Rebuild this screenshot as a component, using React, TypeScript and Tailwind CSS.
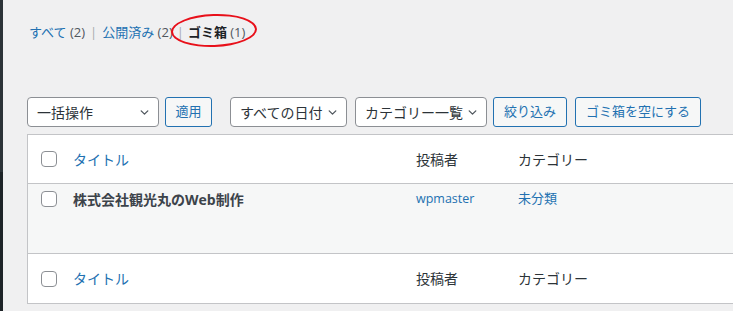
import React from 'react';

const font = "font-['Open_Sans','Noto_Sans_CJK_JP',sans-serif]";

const Chevron = () => (
  <svg width="11" height="11" viewBox="0 0 20 20" className="shrink-0">
    <path d="M4 7l6 6 6-6" fill="none" stroke="#50575e" strokeWidth="2.4" strokeLinecap="round" strokeLinejoin="round" />
  </svg>
);

const Select = ({ label, w }: { label: string; w: string }) => (
  <div className={`${w} h-[30px] bg-white border border-[#8c8f94] rounded-[4px] flex items-center justify-between pl-[9px] pr-[8px] text-[14px] text-[#2c3338]`}>
    <span>{label}</span>
    <Chevron />
  </div>
);

const Btn = ({ label, w }: { label: string; w: string }) => (
  <div className={`${w} h-[30px] bg-[#f6f7f7] border border-[#2271b1] rounded-[3px] flex items-center justify-center text-[13px] text-[#2271b1]`}>
    {label}
  </div>
);

const Check = () => <div className="w-4 h-4 bg-white border border-[#8c8f94] rounded-[4px]" />;

const HeadRow = ({ border }: { border: string }) => (
  <div className={`grid grid-cols-[45px_343px_102px_1fr] h-[49px] items-center text-[14px] ${border}`}>
    <div className="pl-[13px] flex"><Check /></div>
    <div className="text-[#2271b1]">タイトル</div>
    <div className="text-[#2c3338]">投稿者</div>
    <div className="text-[#2c3338]">カテゴリー</div>
  </div>
);

export default function App() {
  return (
    <div className={`${font} w-[733px] h-[311px] overflow-hidden flex bg-[#f0f0f1]`}>
      <div className="w-[3px] shrink-0 flex flex-col">
        <div className="h-[172px] bg-[#2c3338]" />
        <div className="flex-1 bg-[#1d2327]" />
      </div>
      <div className="flex-1 pl-[24px] pt-[23px]">
        <div className="flex items-center h-[20px] text-[13px] pl-[2px] relative">
          <span className="text-[#2271b1]">すべて <span className="text-[#50575e]">(2)</span></span>
          <span className="text-[#a7aaad] mx-[5px]">|</span>
          <span className="text-[#2271b1]">公開済み <span className="text-[#50575e]">(2)</span></span>
          <span className="text-[#a7aaad] mx-[4px]">|</span>
          <span className="text-[#1d2327] font-semibold">ゴミ箱 <span className="text-[#50575e] font-normal">(1)</span></span>
          <div className="absolute left-[144px] top-[-9px] w-[86px] h-[33px] border-2 border-[#e8101a] rounded-[50%] -rotate-2" />
        </div>
        <div className="flex items-center mt-[54px] h-[30px]">
          <Select label="一括操作" w="w-[132px]" />
          <div className="ml-[6px]"><Btn label="適用" w="w-[47px]" /></div>
          <div className="ml-[18px]"><Select label="すべての日付" w="w-[117px]" /></div>
          <div className="ml-[8px]"><Select label="カテゴリー一覧" w="w-[132px]" /></div>
          <div className="ml-[6px]"><Btn label="絞り込み" w="w-[74px]" /></div>
          <div className="ml-[8px]"><Btn label="ゴミ箱を空にする" w="w-[126px]" /></div>
        </div>
        <div className="mt-[7px] w-[760px] bg-white border border-[#c3c4c7]">
          <HeadRow border="border-b border-[#c3c4c7]" />
          <div className="grid grid-cols-[45px_343px_102px_1fr] h-[70px] bg-[#f6f7f7] text-[14px] border-b border-[#c3c4c7]">
            <div className="pl-[13px] pt-[7px] flex"><Check /></div>
            <div className="pt-[5px] font-bold text-[#3c434a]">株式会社観光丸のWeb制作</div>
            <div className="pt-[6px] text-[12.5px] text-[#2271b1]">wpmaster</div>
            <div className="pt-[5px] text-[13px] text-[#2271b1]">未分類</div>
          </div>
          <HeadRow border="" />
        </div>
      </div>
    </div>
  );
}
